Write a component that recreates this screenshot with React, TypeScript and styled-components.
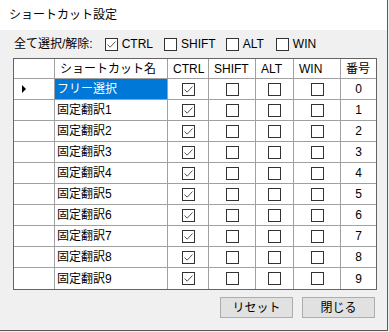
import React from "react";
import styled, { createGlobalStyle } from "styled-components";

const FONT = `"Liberation Sans", "Noto Sans CJK JP", sans-serif`;

const Global = createGlobalStyle`
  html, body { margin: 0; padding: 0; background: #f0f0f0; }
  body { font-family: ${FONT}; font-size: 12px; color: #000; }
`;

const Window = styled.div`
  width: 388px;
  height: 331px;
  box-sizing: border-box;
  border-right: 1px solid #5a5a5a;
  border-bottom: 1px solid #5a5a5a;
  background: #f0f0f0;
  display: flex;
  flex-direction: column;
`;

const TitleBar = styled.div`
  height: 30px;
  flex: none;
  background: #ffffff;
  display: flex;
  align-items: center;
  padding-left: 9px;
  font-size: 12px;
  line-height: 1;
`;

const Toolbar = styled.div`
  height: 28px;
  flex: none;
  display: flex;
  align-items: center;
  padding-left: 14px;
  line-height: 1;
`;

const Label = styled.span`
  margin-right: 12px;
`;

const CheckItem = styled.label<{ $gap: number }>`
  display: flex;
  align-items: center;
  gap: 4px;
  margin-right: ${(p) => p.$gap}px;
`;

const Box = styled.span`
  width: 13px;
  height: 13px;
  box-sizing: border-box;
  border: 1px solid #333333;
  background: #ffffff;
  display: inline-flex;
  align-items: center;
  justify-content: center;
  flex: none;
`;

const Check = ({ on }: { on: boolean }) => (
  <Box>
    {on && (
      <svg width="11" height="11" viewBox="0 0 11 11">
        <path d="M1.5 5.5 L4.2 8.2 L9.5 2.5" fill="none" stroke="#555" strokeWidth="1" />
      </svg>
    )}
  </Box>
);

const GridWrap = styled.div`
  margin-left: 13px;
  width: 364px;
  box-sizing: border-box;
  border: 1px solid #646464;
  background: #ffffff;
  display: grid;
  grid-template-columns: 41px 113px 41px 47px 38px 47px 35px;
`;

const Cell = styled.div<{ $h: number; $align: string; $last: boolean; $bottom: boolean; $sel?: boolean; $pad: number }>`
  height: ${(p) => p.$h}px;
  box-sizing: border-box;
  border-right: ${(p) => (p.$last ? "none" : "1px solid #a0a0a0")};
  border-bottom: ${(p) => (p.$bottom ? "1px solid #a0a0a0" : "none")};
  display: flex;
  align-items: center;
  justify-content: ${(p) => p.$align};
  padding-left: ${(p) => p.$pad}px;
  background: ${(p) => (p.$sel ? "#0078d7" : "#ffffff")};
  color: ${(p) => (p.$sel ? "#ffffff" : "#000000")};
  line-height: 1;
  white-space: nowrap;
  overflow: hidden;
`;

const Arrow = styled.span`
  width: 0;
  height: 0;
  border-top: 4px solid transparent;
  border-bottom: 4px solid transparent;
  border-left: 4px solid #000;
  margin-left: 8px;
`;

const Footer = styled.div`
  display: flex;
  justify-content: flex-end;
  gap: 9px;
  padding-right: 12px;
  margin-top: 7px;
`;

const Button = styled.button`
  width: 73px;
  height: 21px;
  box-sizing: border-box;
  background: #e1e1e1;
  border: 1px solid #adadad;
  font-family: ${FONT};
  font-size: 12px;
  color: #000;
  padding: 0;
  line-height: 1;
`;

const headers = ["", "ショートカット名", "CTRL", "SHIFT", "ALT", "WIN", "番号"];
const names = ["フリー選択", ...Array.from({ length: 9 }, (_, i) => `固定翻訳${i + 1}`)];

export default function App() {
  return (
    <>
      <Global />
      <Window>
        <TitleBar>ショートカット設定</TitleBar>
        <Toolbar>
          <Label>全て選択/解除:</Label>
          <CheckItem $gap={11}><Check on={true} />CTRL</CheckItem>
          <CheckItem $gap={10}><Check on={false} />SHIFT</CheckItem>
          <CheckItem $gap={12}><Check on={false} />ALT</CheckItem>
          <CheckItem $gap={0}><Check on={false} />WIN</CheckItem>
        </Toolbar>
        <GridWrap>
          {headers.map((h, i) => (
            <Cell key={"h" + i} $h={20} $align="flex-start" $pad={i === 0 ? 0 : 5} $last={i === 6} $bottom={true}>
              {h}
            </Cell>
          ))}
          {names.map((n, r) => {
            const bottom = r !== names.length - 1;
            return (
              <React.Fragment key={r}>
                <Cell $h={21} $align="flex-start" $pad={0} $last={false} $bottom={bottom}>
                  {r === 0 && <Arrow />}
                </Cell>
                <Cell $h={21} $align="flex-start" $pad={2} $last={false} $bottom={bottom} $sel={r === 0}>
                  {n}
                </Cell>
                <Cell $h={21} $align="center" $pad={0} $last={false} $bottom={bottom}><Check on={true} /></Cell>
                <Cell $h={21} $align="center" $pad={0} $last={false} $bottom={bottom}><Check on={false} /></Cell>
                <Cell $h={21} $align="center" $pad={0} $last={false} $bottom={bottom}><Check on={false} /></Cell>
                <Cell $h={21} $align="center" $pad={0} $last={false} $bottom={bottom}><Check on={false} /></Cell>
                <Cell $h={21} $align="center" $pad={0} $last={true} $bottom={bottom}>{r}</Cell>
              </React.Fragment>
            );
          })}
        </GridWrap>
        <Footer>
          <Button>リセット</Button>
          <Button>閉じる</Button>
        </Footer>
      </Window>
    </>
  );
}
